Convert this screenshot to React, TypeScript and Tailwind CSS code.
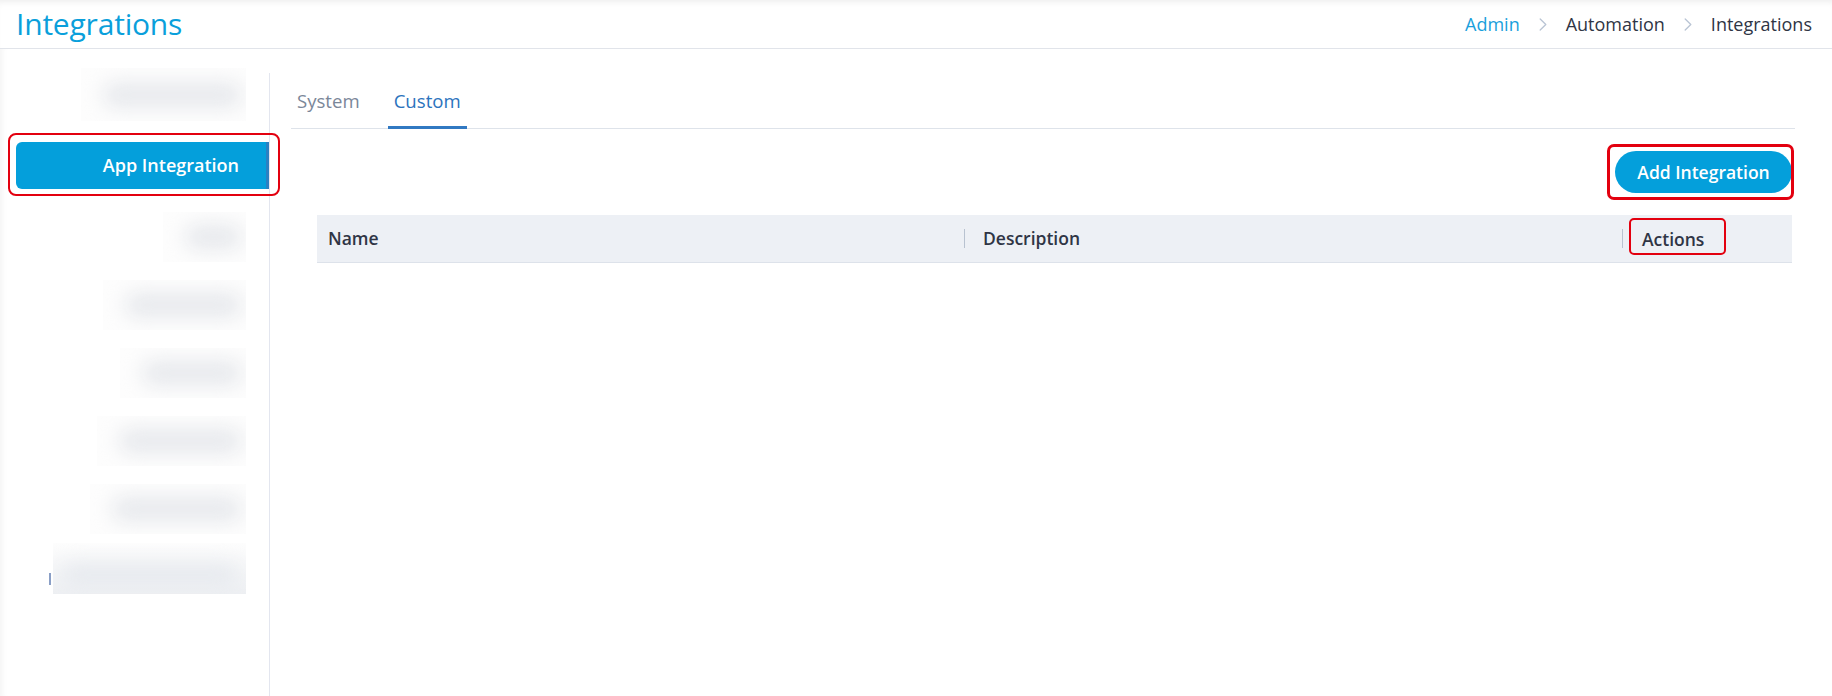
const sideItems = [
  { w: 'w-[83px]', bar: 'ml-[22px] mr-[4px]' },
  { w: 'w-[143px]', bar: 'ml-[22px] mr-[4px]' },
  { w: 'w-[126px]', bar: 'ml-[22px] mr-[4px]' },
  { w: 'w-[149px]', bar: 'ml-[22px] mr-[4px]' },
  { w: 'w-[156px]', bar: 'ml-[22px] mr-[4px]' },
];

function Chevron() {
  return (
    <svg width="8" height="13" viewBox="0 0 8 13" fill="none">
      <path d="M1.2 1l5.6 5.5-5.6 5.5" stroke="#b9c4d4" strokeWidth="1.3" strokeLinecap="round" strokeLinejoin="round" />
    </svg>
  );
}

function BlurBox({ w, bar }: { w: string; bar: string }) {
  return (
    <div className={`${w} h-[50px] overflow-hidden bg-[#fdfdfd] flex items-center`}>
      <span className={`block flex-1 h-[24px] rounded-full bg-[#e6e8ec] blur-[10px] ${bar}`} />
    </div>
  );
}

export default function App() {
  return (
    <div className="min-h-[696px] bg-white font-['Open_Sans',sans-serif] text-[#2f3545]">
      <header className="h-[49px] flex items-center justify-between pl-[16px] pr-[20px] border-b border-[#e1e4ea] shadow-[inset_0_6px_6px_-4px_rgba(0,0,0,0.07)]">
        <h1 className="text-[30px] leading-none font-medium text-[#0a9fdb] tracking-[-0.2px]">Integrations</h1>
        <nav className="flex items-center gap-[19px] text-[18px] leading-none">
          <span className="text-[#1a9fdc]">Admin</span>
          <Chevron />
          <span>Automation</span>
          <Chevron />
          <span>Integrations</span>
        </nav>
      </header>

      <div className="flex">
        <aside className="w-[269px] shrink-0 pt-[19px] shadow-[inset_7px_0_6px_-5px_rgba(0,0,0,0.05)]">
          <div className="flex justify-end pr-[23px]">
            <div className="w-[165px] h-[53px] overflow-hidden bg-[#fdfdfd] flex items-center">
              <span className="block flex-1 h-[24px] ml-[22px] mr-[4px] rounded-full bg-[#e6e8ec] blur-[10px]" />
            </div>
          </div>

          <div className="relative mt-[21px] ml-[16px]">
            <div className="h-[47px] flex items-center justify-end pr-[27px] bg-[#049fdb] rounded-l-[6px] border-r-[3px] border-[#2a80c2] text-white text-[18px] font-semibold">
              App Integration
            </div>
            <span className="absolute -left-[8px] -right-[11px] -top-[9px] -bottom-[7px] border-[2.5px] border-[#e3000f] rounded-[8px]" />
          </div>

          <div className="mt-[14px]">
            {sideItems.map((it, i) => (
              <div key={i} className="h-[68px] flex items-center justify-end pr-[23px]">
                <BlurBox w={it.w} bar={it.bar} />
              </div>
            ))}
            <div className="h-[68px] flex items-start justify-end pr-[23px]">
              <span className="block w-[2px] h-[12px] mt-[30px] mr-[2px] bg-[#8a9fc6]" />
              <div className="w-[193px] h-[51px] overflow-hidden bg-gradient-to-b from-[#fdfdfd] to-[#eef0f3] flex items-end pb-[8px]">
                <span className="block flex-1 h-[22px] mx-[8px] rounded-full bg-[#e6e9ee] blur-[10px]" />
              </div>
            </div>
          </div>
        </aside>

        <main className="flex-1 mt-[24px] min-h-[623px] border-l border-[#e3e6ef] pl-[21px] pr-[37px]">
          <div className="h-[56px] flex items-stretch gap-[22px] border-b border-[#dee3ea] text-[18.6px]">
            <button className="px-[6px] flex items-center text-[#7b8799]">System</button>
            <button className="px-[6px] flex items-center pt-[3px] text-[#2c73bd] border-b-[3px] border-[#3179c2] -mb-px">Custom</button>
          </div>

          <div className="pl-[26px] pr-[3px]">
            <div className="flex justify-end mt-[22px]">
              <div className="relative">
                <button className="h-[42px] w-[177px] rounded-full bg-[#049fdb] text-white text-[17.5px] font-semibold">
                  Add Integration
                </button>
                <span className="absolute -left-[8px] -right-[2px] -top-[7px] -bottom-[7px] border-[3px] border-[#e3000f] rounded-[7px]" />
              </div>
            </div>

            <div className="mt-[22px] h-[48px] grid grid-cols-[647px_658px_1fr] items-center bg-[#edf0f5] border-b border-[#dde2ea] text-[17.5px] font-semibold text-[#2f3545]">
              <div className="pl-[11px]">Name</div>
              <div className="flex items-center">
                <span className="w-px h-[19px] bg-[#b8c2d0]" />
                <span className="pl-[18px]">Description</span>
              </div>
              <div className="flex items-center">
                <span className="w-px h-[19px] bg-[#b8c2d0]" />
                <span className="relative ml-[19px] leading-[24px]">
                  Actions
                  <span className="absolute -left-[13px] -right-[22px] -top-[9px] -bottom-[4px] border-[2.5px] border-[#e3000f] rounded-[5px]" />
                </span>
              </div>
            </div>
          </div>
        </main>
      </div>
    </div>
  );
}
